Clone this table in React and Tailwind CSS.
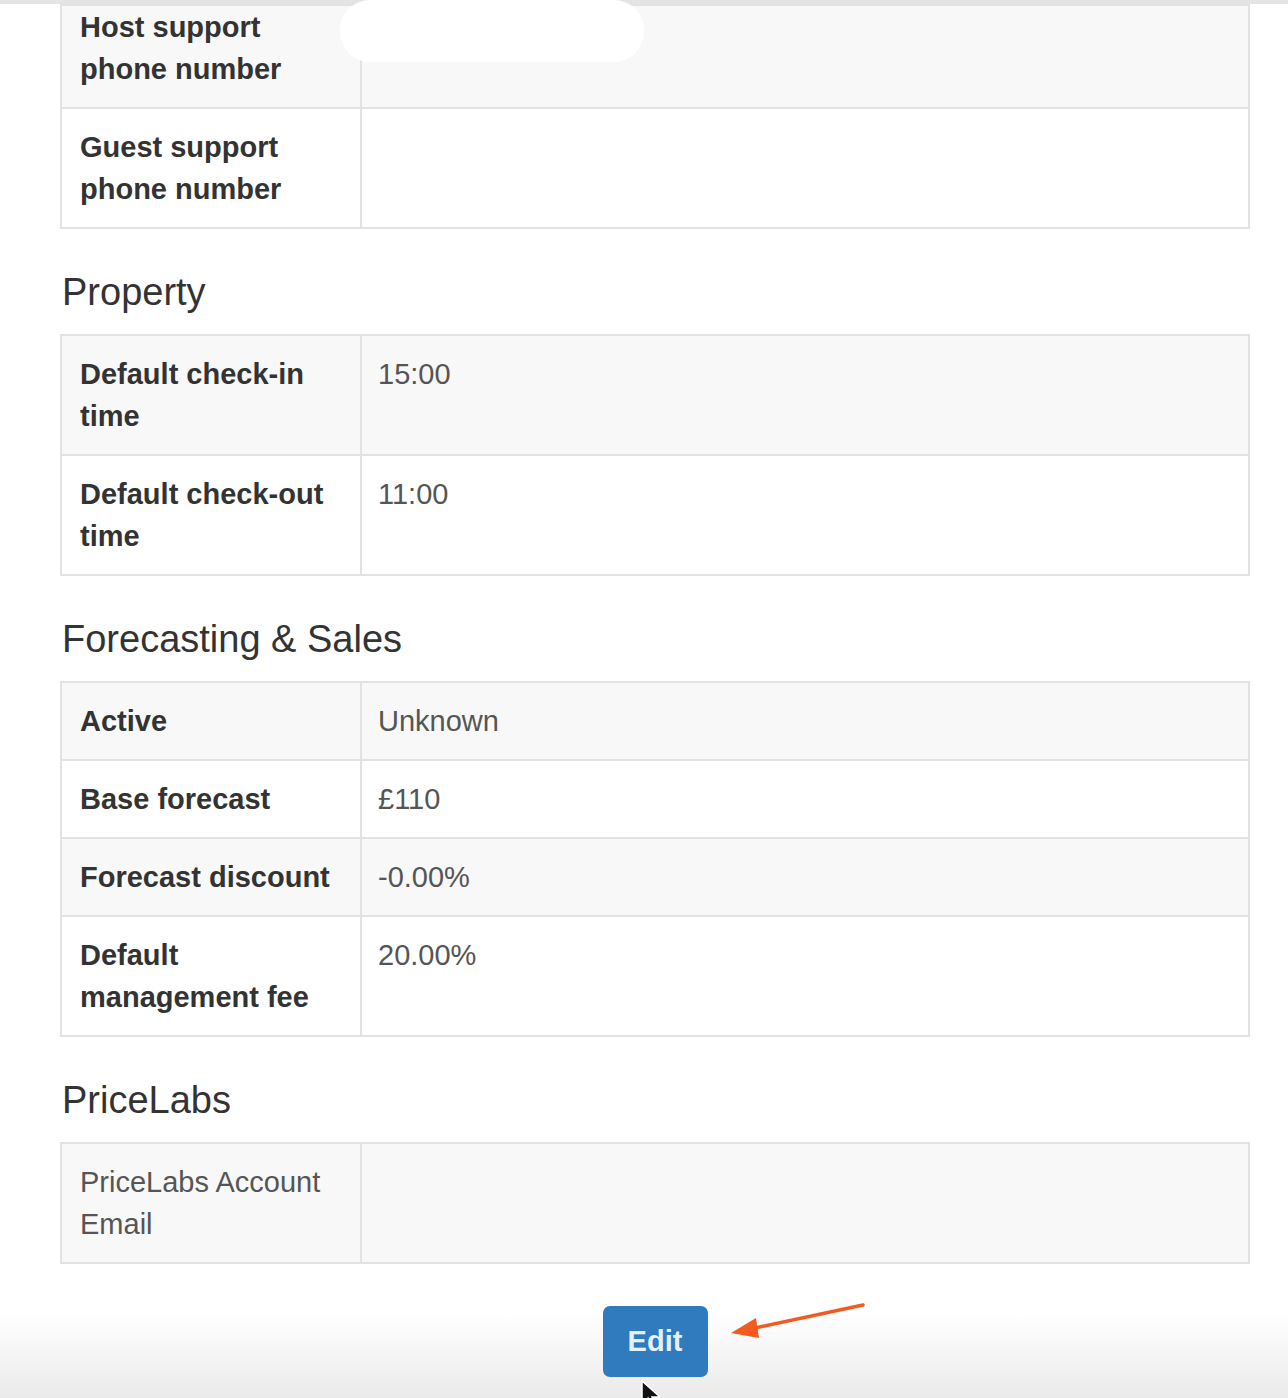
const sections = [
  {
    title: null,
    rows: [
      { label: ['Host support', 'phone number'], value: '', first: true },
      { label: ['Guest support', 'phone number'], value: '' },
    ],
  },
  {
    title: 'Property',
    rows: [
      { label: ['Default check-in', 'time'], value: '15:00' },
      { label: ['Default check-out', 'time'], value: '11:00' },
    ],
  },
  {
    title: 'Forecasting & Sales',
    rows: [
      { label: ['Active'], value: 'Unknown' },
      { label: ['Base forecast'], value: '£110' },
      { label: ['Forecast discount'], value: '-0.00%' },
      { label: ['Default', 'management fee'], value: '20.00%' },
    ],
  },
  {
    title: 'PriceLabs',
    rows: [{ label: ['PriceLabs Account', 'Email'], value: '', plain: true }],
  },
];

function DetailTable({ rows, redact }) {
  return (
    <table className="w-full table-fixed border-collapse border-2 border-[#e2e2e2] text-[29px] leading-[42px]">
      <colgroup>
        <col className="w-[300px]" />
        <col />
      </colgroup>
      <tbody>
        {rows.map((r, i) => (
          <tr key={i} className={i % 2 === 0 ? 'bg-[#f8f8f8]' : 'bg-white'}>
            <td
              className={`border-2 border-[#e2e2e2] px-[18px] align-top ${
                r.first ? 'pt-0 pb-[17px]' : 'py-[17px]'
              } ${r.plain ? 'font-normal text-[#555]' : 'font-bold text-[#333]'}`}
            >
              {r.label.map((l) => (
                <div key={l}>{l}</div>
              ))}
            </td>
            <td
              className={`relative border-2 border-[#e2e2e2] px-[16px] align-top text-[#555] ${
                r.first ? 'pt-0 pb-[17px]' : 'py-[17px]'
              }`}
            >
              {redact && r.first && (
                <div className="absolute left-[-22px] top-[-6px] h-[62px] w-[304px] rounded-[30px] bg-white" />
              )}
              {r.value}
            </td>
          </tr>
        ))}
      </tbody>
    </table>
  );
}

export default function App() {
  return (
    <div
      className="relative h-[1398px] w-[1288px] overflow-hidden bg-gradient-to-b from-white from-[94%] to-[#eaeaea]"
      style={{ fontFamily: '"Liberation Sans", Arial, sans-serif' }}
    >
      <div className="h-[4px] w-full bg-[#e4e4e4]" />
      <div className="w-[1250px] pl-[60px]">
        {sections.map((s, i) => (
          <div key={i}>
            {s.title && (
              <h4 className="mb-[21px] mt-[42px] pl-[2px] text-[38px] leading-[42px] font-normal text-[#333]">
                {s.title}
              </h4>
            )}
            <DetailTable rows={s.rows} redact={i === 0} />
          </div>
        ))}
        <div className="mt-[42px] flex justify-center">
          <button
            type="button"
            className="h-[71px] w-[105px] rounded-[7px] bg-[#2f7bbd] text-[29px] font-bold text-[#e4f1fb]"
          >
            Edit
          </button>
        </div>
      </div>

      {/* annotation arrow */}
      <svg className="absolute left-[726px] top-[1296px]" width="145" height="46" viewBox="0 0 145 46">
        <line x1="137" y1="9" x2="24" y2="33" stroke="#f25a1f" strokeWidth="3.5" strokeLinecap="round" />
        <polygon points="5,37 30,22 33,42" fill="#f25a1f" />
      </svg>

      {/* mouse cursor */}
      <svg className="absolute left-[640px] top-[1380px]" width="24" height="30" viewBox="0 0 24 30">
        <path d="M2 1 L2 24 L8 18 L12 27 L16 25 L12 17 L20 17 Z" fill="#111" stroke="#fff" strokeWidth="1.5" />
      </svg>
    </div>
  );
}
